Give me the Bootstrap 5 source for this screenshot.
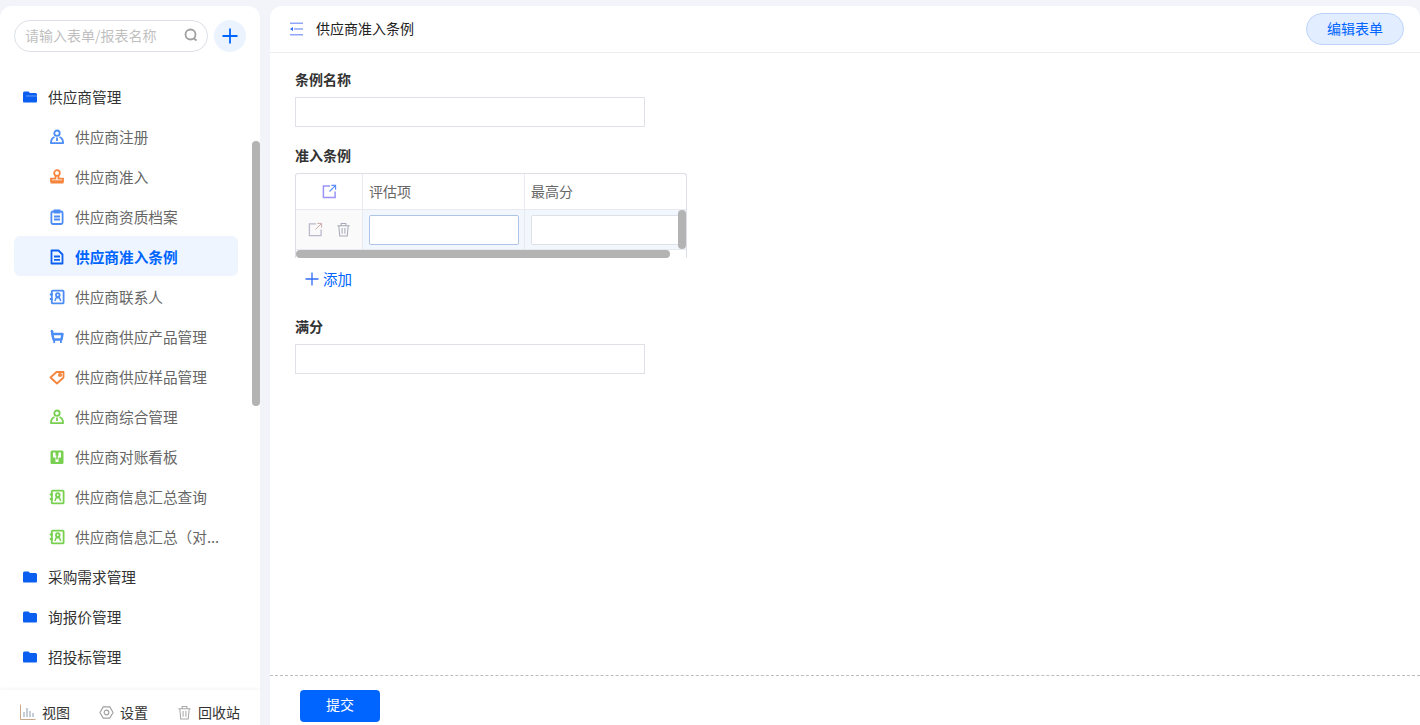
<!DOCTYPE html>
<html lang="zh">
<head>
<meta charset="utf-8">
<title>供应商准入条例</title>
<link href="https://cdn.jsdelivr.net/npm/bootstrap@5.3.0/dist/css/bootstrap.min.css" rel="stylesheet">
<style>
html,body{height:100%;overflow:hidden}
body{background:#f2f4f9;font-family:"Noto Sans CJK SC","Liberation Sans",sans-serif;font-size:14px;color:#333}
.shell{height:725px;padding-top:6px;gap:10px}
.side{width:260px;height:719px;background:#fff;border-radius:12px 12px 0 0;position:relative;overflow:hidden;flex:none}
.searchrow{padding:14px 14px 0;gap:6px}
.searchbox{width:194px;height:32px;border:1px solid #dcdfe6;border-radius:16px;padding:0 9px 2px 10px;color:#bfbfbf;font-size:14px;line-height:28px}
.addcircle{width:32px;height:32px;border-radius:50%;background:#ebf3ff}
.tree{padding:24px 22px 0 14px;font-size:14.67px}
.treeitem{height:40px;color:#333;padding-left:8px;padding-top:2px;gap:10px;white-space:nowrap}
.treeitem span{line-height:20px}
.treeitem svg{flex:none}
.treesub{color:#666;padding-left:35px;gap:10px;border-radius:6px}
.treesub.on{background:#eef5ff;color:#0065ff;font-weight:700}
.scrollv{position:absolute;left:252px;top:135px;width:8px;height:265px;background:#b3b3b3;border-radius:4px}
.sidefoot{position:absolute;left:0;right:0;bottom:0;height:35px;background:#fff;box-shadow:0 -1px 4px rgba(0,0,0,.05);color:#333;padding:12px 0 0 20px;gap:29px}
.footitem{gap:6px;line-height:20px;align-items:center;height:20px}
.mainpane{width:1150px;height:719px;background:#fff;border-radius:12px 12px 0 0;overflow:hidden}
.tophead{height:47px;border-bottom:1px solid #eceef2;padding:0 16px 0 19px;color:#222;font-size:14px}
.headgroup{gap:13px}
.headtitle{padding-bottom:2px}
.editbtn{width:98px;height:32px;background:#e2edff;border:1px solid #bcd4fb;border-radius:16px;color:#0065ff;font-size:14px;line-height:28px;text-align:center}
.formarea{height:623px;padding:16px 25px 0;border-bottom:1px dashed #bdbdbd}
.flabel{font-weight:700;font-size:14px;line-height:20px;color:#333;margin-bottom:8px}
.finput{width:350px;height:30px;border:1px solid #e0e0e6;background:#fff;display:block}
.fgap{margin-bottom:18px}
.sub1{height:85px;width:392px;border:1px solid #dcdfe8;border-bottom:0;border-radius:3px 3px 0 0;position:relative;overflow:hidden}
.hrow{height:36px;border-bottom:1px solid #e8eaef}
.ccell{flex:none;border-right:1px solid #e8eaef;padding-left:6px;color:#666;font-size:14px}
.c1{width:67px;padding:0;justify-content:center}
.c2{width:162px}
.c3{width:162px;border-right:0}
.brow{height:40px;border-bottom:1px solid #e8eaef}
.brow .c1{background:#fafafa;gap:13px}
.brow .c2,.brow .c3{background:#f2f6fd}
.cinput{height:30px;width:150px;background:#fff;border:1px solid #aec3e8;border-radius:2px}
.cinput.plain{width:155px;border-color:#dfe1ea}
.scrollh{position:absolute;left:0;top:76px;width:374px;height:8px;background:#b3b3b3;border-radius:4px}
.scrollv2{position:absolute;left:382px;top:36px;width:8px;height:39px;background:#b3b3b3;border-radius:4px}
.addline{color:#0065ff;font-size:14.5px;gap:4px;padding:11px 0 0 10px;line-height:20px;height:58px}
.submitbar{padding:14px 0 0 30px}
.submitbtn{width:80px;height:32px;background:#0065ff;border:0;border-radius:4px;color:#fff;font-size:14px;padding:0 0 3px}
</style>
</head>
<body>
<svg width="0" height="0" class="d-none">
  <symbol id="folder" viewBox="0 0 16 16"><path fill="#0a5ff0" d="M1 4a1.500 1.500 0 0 1 1.500-1.500h4L8 4h5.500A1.500 1.500 0 0 1 15 5.500v7a1 1 0 0 1-1 1H2a1 1 0 0 1-1-1z"/></symbol>
  <symbol id="person" viewBox="0 0 16 16"><g fill="none" stroke="currentColor" stroke-width="1.800"><circle cx="8" cy="4.200" r="2.700"/><path d="M5.500 8C3.500 8.800 1.900 10.500 1.900 14.100h12.200C14.100 10.500 12.500 8.800 10.500 8M8 8.500v3.500" stroke-linejoin="round"/></g></symbol>
  <symbol id="contact" viewBox="0 0 16 16"><g fill="none" stroke="currentColor" stroke-width="1.800"><rect x="2.800" y="1.600" width="11.800" height="12.800" rx="1"/><path d="M.8 5.500h3M.8 10h3"/><circle cx="8.800" cy="6" r="1.800"/><path d="M5.800 12l1.400-3.300h3.200l1.400 3.300" stroke-width="1.500"/></g></symbol>
  <symbol id="trash" viewBox="0 0 16 16"><g fill="none" stroke="currentColor" stroke-width="1.100"><path d="M1.500 4h13M5.500 4V1.500h5V4M3 4l1 11h8l1-11M6.500 6.500v6M9.500 6.500v6"/></g></symbol>
</svg>
<div class="shell d-flex">
  <aside class="side">
    <div class="searchrow d-flex">
      <div class="searchbox d-flex justify-content-between align-items-center">
        <span>请输入表单/报表名称</span>
        <svg width="14" height="14" viewBox="0 0 14 14" fill="none" stroke="#a0a0a0" stroke-width="1.800"><circle cx="6.500" cy="6.500" r="5"/><path d="M10 10.500l2.500 2"/></svg>
      </div>
      <div class="addcircle d-flex align-items-center justify-content-center">
        <svg width="16" height="16" viewBox="0 0 16 16" stroke="#0065ff" stroke-width="1.800"><path d="M8 .5v15M.5 8h15"/></svg>
      </div>
    </div>
    <div class="tree">
      <div class="treeitem d-flex align-items-center">
        <svg width="16" height="16" viewBox="0 0 16 16"><use href="#folder"/><path d="M4 7h11" stroke="#cfe0ff" stroke-width=".8" opacity=".6"/></svg>
        <span>供应商管理</span>
      </div>
      <div class="treeitem treesub d-flex align-items-center">
        <svg width="16" height="16" viewBox="0 0 16 16" color="#4c8cf5"><use href="#person"/></svg>
        <span>供应商注册</span>
      </div>
      <div class="treeitem treesub d-flex align-items-center">
        <svg width="16" height="16" viewBox="0 0 16 16"><g fill="none" stroke="#f5843c" stroke-width="1.800"><circle cx="8" cy="4" r="2.800"/><path d="M6.500 7v2.700H2v2.500h12V9.700H9.500V7"/></g><path d="M1.500 12.500h13v2h-13z" fill="#f5843c"/></svg>
        <span>供应商准入</span>
      </div>
      <div class="treeitem treesub d-flex align-items-center">
        <svg width="16" height="16" viewBox="0 0 16 16" fill="none" stroke="#4c8cf5" stroke-width="1.800"><rect x="2.400" y="2.500" width="11.200" height="12.500" rx="1.500"/><path d="M5.500 1.500h5v2h-5zM5 7.500h6M5 10.500h6"/></svg>
        <span>供应商资质档案</span>
      </div>
      <div class="treeitem treesub on d-flex align-items-center">
        <svg width="16" height="16" viewBox="0 0 16 16" fill="none" stroke="#0a5ff0" stroke-width="1.800"><path d="M2.500 1.500h7l4 4V14.500h-11z" stroke-linejoin="round"/><path d="M5 7.500h6M5 10.800h6"/></svg>
        <span>供应商准入条例</span>
      </div>
      <div class="treeitem treesub d-flex align-items-center">
        <svg width="16" height="16" viewBox="0 0 16 16" color="#4c8cf5"><use href="#contact"/></svg>
        <span>供应商联系人</span>
      </div>
      <div class="treeitem treesub d-flex align-items-center">
        <svg width="16" height="16" viewBox="0 0 16 16"><path d="M2 1.500l1.200 1V5h10.300l-1 5.500H4.500L3.200 5" fill="none" stroke="#4c8cf5" stroke-width="2.400" stroke-linejoin="round"/><path d="M4.300 10.500h1.800v3.500H4.300zM11 10.500h1.800v3.500H11z" fill="#4c8cf5"/></svg>
        <span>供应商供应产品管理</span>
      </div>
      <div class="treeitem treesub d-flex align-items-center">
        <svg width="16" height="16" viewBox="0 0 16 16" fill="none" stroke="#f5843c" stroke-width="1.800"><path d="M1.500 8.500 7.500 3h7v5.500L8 14.500z" stroke-linejoin="round"/><circle cx="11" cy="6" r="1.200"/></svg>
        <span>供应商供应样品管理</span>
      </div>
      <div class="treeitem treesub d-flex align-items-center">
        <svg width="16" height="16" viewBox="0 0 16 16" color="#78d050"><use href="#person"/></svg>
        <span>供应商综合管理</span>
      </div>
      <div class="treeitem treesub d-flex align-items-center">
        <svg width="16" height="16" viewBox="0 0 16 16"><rect x="1.500" y="1.500" width="13" height="13.500" rx="1.500" fill="#78d050"/><path d="M4 3.500h2.500v3h3v-3H12v5H9.500v4.500h-3V8.500H4z" fill="#fff"/><path d="M7.200 5.500h1.600v5H7.200z" fill="#78d050"/></svg>
        <span>供应商对账看板</span>
      </div>
      <div class="treeitem treesub d-flex align-items-center">
        <svg width="16" height="16" viewBox="0 0 16 16" color="#78d050"><use href="#contact"/></svg>
        <span>供应商信息汇总查询</span>
      </div>
      <div class="treeitem treesub d-flex align-items-center">
        <svg width="16" height="16" viewBox="0 0 16 16" color="#78d050"><use href="#contact"/></svg>
        <span>供应商信息汇总（对...</span>
      </div>
      <div class="treeitem d-flex align-items-center">
        <svg width="16" height="16" viewBox="0 0 16 16"><use href="#folder"/></svg>
        <span>采购需求管理</span>
      </div>
      <div class="treeitem d-flex align-items-center">
        <svg width="16" height="16" viewBox="0 0 16 16"><use href="#folder"/></svg>
        <span>询报价管理</span>
      </div>
      <div class="treeitem d-flex align-items-center">
        <svg width="16" height="16" viewBox="0 0 16 16"><use href="#folder"/></svg>
        <span>招投标管理</span>
      </div>
    </div>
    <div class="scrollv"></div>
    <div class="sidefoot d-flex">
      <div class="footitem d-flex"><svg width="16" height="16" viewBox="0 0 16 16" fill="none" stroke="#c9a98a"><path d="M.5 .5v15h15"/><path d="M4 13V8M7 13V4M10 13V7M13 13V9" stroke="#8a9ab0"/></svg><span>视图</span></div>
      <div class="footitem d-flex"><svg width="15" height="15" viewBox="0 0 16 16" fill="none" stroke="#a0a0a0" stroke-width="1.200"><path d="M1 8l3.500-6h7L15 8l-3.500 6h-7z"/><circle cx="8" cy="8" r="2.500"/></svg><span>设置</span></div>
      <div class="footitem d-flex"><svg width="15" height="15" viewBox="0 0 16 16" color="#a8a8a8"><use href="#trash"/></svg><span>回收站</span></div>
    </div>
  </aside>
  <main class="mainpane">
    <header class="tophead d-flex align-items-center justify-content-between">
      <div class="headgroup d-flex align-items-center">
        <svg width="14" height="14" viewBox="0 0 14 14" fill="none" stroke="#8fa5fb" stroke-width="1.500"><path d="M1 1.200h13M5 7h9M1 12.800h13"/><path d="M1 7l3-2v4z" fill="#2f6cf5" stroke="none"/></svg>
        <span class="headtitle">供应商准入条例</span>
      </div>
      <div class="editbtn">编辑表单</div>
    </header>
    <div class="formarea">
      <div class="flabel">条例名称</div>
      <div class="finput fgap"></div>
      <div class="flabel">准入条例</div>
      <div class="sub1">
        <div class="hrow d-flex">
          <div class="ccell c1 d-flex align-items-center"><svg width="15" height="15" viewBox="0 0 16 16" fill="none" stroke="#9a94f8" stroke-width="1.600"><path d="M8.500 2H1.500v12.500h12.500V8"/><path d="M8 8l6-6M10 1.500h4.500V6" stroke="#5c8cf8" stroke-width="1.200"/></svg></div>
          <div class="ccell c2 d-flex align-items-center">评估项</div>
          <div class="ccell c3 d-flex align-items-center">最高分</div>
        </div>
        <div class="brow d-flex">
          <div class="ccell c1 d-flex align-items-center"><svg width="15" height="15" viewBox="0 0 16 16" fill="none" stroke="#bcb8cc" stroke-width="1.400"><path d="M8.500 2H1.500v12.500h12.500V8"/><path d="M8 8l6-6M10 1.500h4.500V6" stroke="#c8a8a8" stroke-width="1"/></svg><svg width="15" height="15" viewBox="0 0 16 16" color="#a8a8b8"><use href="#trash"/></svg></div>
          <div class="ccell c2 d-flex align-items-center"><div class="cinput"></div></div>
          <div class="ccell c3 d-flex align-items-center"><div class="cinput plain"></div></div>
        </div>
        <div class="scrollh"></div>
        <div class="scrollv2"></div>
      </div>
      <div class="addline d-flex">
        <svg width="14" height="20" viewBox="0 0 14 20" stroke="#2f6cf5" stroke-width="1.300"><path d="M7 3.500v13M.5 10h13"/></svg>
        <span>添加</span>
      </div>
      <div class="flabel">满分</div>
      <div class="finput"></div>
    </div>
    <div class="submitbar">
      <button type="button" class="btn submitbtn">提交</button>
    </div>
  </main>
</div>
<script src="https://cdn.jsdelivr.net/npm/bootstrap@5.3.0/dist/js/bootstrap.bundle.min.js"></script>
</body>
</html>
